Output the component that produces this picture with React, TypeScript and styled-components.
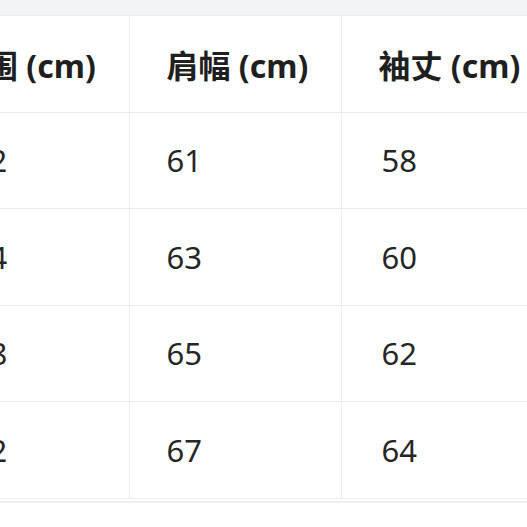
import styled, { createGlobalStyle } from "styled-components";

const GlobalStyle = createGlobalStyle`
  html, body {
    margin: 0;
    padding: 0;
    background: #ffffff;
    overflow: hidden;
  }

  body {
    font-family: "Noto Sans", "Noto Sans CJK SC", sans-serif;
    color: #222222;
  }
`;

const ScPage = styled.div`
  width: 527px;
  height: 527px;
  overflow: hidden;
  background: #ffffff;
`;

const ScTopBar = styled.div`
  height: 15px;
  background: #f3f4f6;
`;

// the table is cropped on the left, so it starts before the page edge
const ScCard = styled.div`
  border-top: 1px solid #ececec;
  border-bottom: 2px solid #f0f0f0;
  padding-bottom: 2px;
  margin-left: -83px;
  width: 700px;
`;

const ScTable = styled.table`
  border-collapse: collapse;
  table-layout: fixed;
`;

const ScHead = styled.th`
  width: 212px;
  height: 96px;
  padding: 0 0 0 37px;
  box-sizing: border-box;
  text-align: left;
  font-size: 32px;
  font-weight: 700;
  color: #1f1f1f;
  border-right: 1px solid #eeeeee;
  border-bottom: 1px solid #ebebeb;
  white-space: nowrap;
`;

const ScCell = styled.td<{ $shift?: number }>`
  height: 96.5px;
  padding: 0 0 0 ${(p) => 37 + (p.$shift ?? 0)}px;
  box-sizing: border-box;
  font-size: 31px;
  font-weight: 400;
  color: #262626;
  border-right: 1px solid #eeeeee;
  border-bottom: 1px solid #ebebeb;
  white-space: nowrap;
`;

const headers = ["胸围 (cm)", "肩幅 (cm)", "袖丈 (cm)"];

const rows = [
  ["102", "61", "58"],
  ["104", "63", "60"],
  ["108", "65", "62"],
  ["112", "67", "64"],
];

export default function App() {
  return (
    <ScPage>
      <GlobalStyle />
      <ScTopBar />
      <ScCard>
        <ScTable>
          <thead>
            <tr>
              {headers.map((h) => (
                <ScHead key={h}>{h}</ScHead>
              ))}
            </tr>
          </thead>
          <tbody>
            {rows.map((r, i) => (
              <tr key={i}>
                {r.map((v, j) => (
                  <ScCell key={j} $shift={j === 2 ? 3 : 0}>
                    {v}
                  </ScCell>
                ))}
              </tr>
            ))}
          </tbody>
        </ScTable>
      </ScCard>
    </ScPage>
  );
}
